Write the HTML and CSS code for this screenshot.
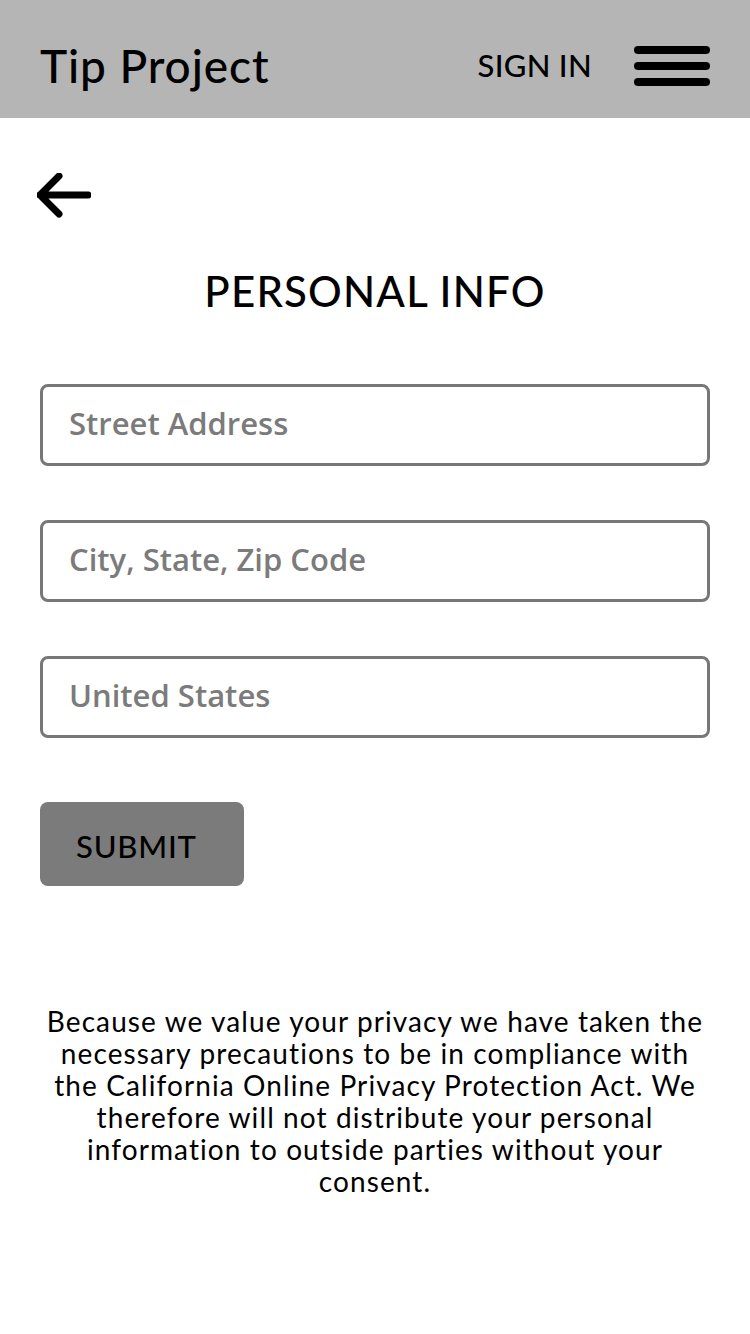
FILE: index.html
```html
<!DOCTYPE html>
<html lang="en">
<head>
<meta charset="utf-8">
<title>Tip Project</title>
<link rel="stylesheet" href="styles.css">
</head>
<body>
<header class="topbar">
  <div class="brand">Tip Project</div>
  <nav class="nav">
    <a class="signin" href="#">SIGN IN</a>
    <button class="burger" aria-label="Menu"><span></span><span></span><span></span></button>
  </nav>
</header>
<main class="page">
  <a class="back" href="#" aria-label="Back">
    <svg width="54" height="46" viewBox="0 0 54 46"><path d="M22 3 L3 22 L22 41 M3 22 H51" fill="none" stroke="#000" stroke-width="7" stroke-linecap="round" stroke-linejoin="round"/></svg>
  </a>
  <h1 class="title">PERSONAL INFO</h1>
  <form class="form">
    <input class="field" type="text" placeholder="Street Address">
    <input class="field" type="text" placeholder="City, State, Zip Code">
    <input class="field" type="text" placeholder="United States">
    <button class="submit" type="button">SUBMIT</button>
  </form>
  <p class="notice">Because we value your privacy we have taken the<br>necessary precautions to be in compliance with<br>the California Online Privacy Protection Act. We<br>therefore will not distribute your personal<br>information to outside parties without your<br>consent.</p>
</main>
</body>
</html>
```
FILE: styles.css
```css
html, body {
  margin: 0;
  padding: 0;
  background: #fff;
}
body {
  font-family: "Lato", "Noto Sans", sans-serif;
  color: #000;
}
.topbar {
  height: 118px;
  background: #b5b5b5;
  display: flex;
  align-items: center;
  justify-content: space-between;
  padding: 12px 40px 0 40px;
  box-sizing: border-box;
}
.brand {
  font-size: 46px;
  font-weight: 500;
  letter-spacing: 0.9px;
}
.nav {
  display: flex;
  align-items: center;
  gap: 42px;
}
.signin {
  color: #000;
  text-decoration: none;
  font-size: 31px;
  font-weight: 500;
  letter-spacing: 0.3px;
}
.burger {
  display: flex;
  flex-direction: column;
  gap: 8px;
  padding: 0;
  border: 0;
  background: none;
  width: 76px;
  margin-top: 2px;
}
.burger span {
  display: block;
  width: 76px;
  height: 8px;
  border-radius: 4px;
  background: #000;
}
.page {
  padding: 0 40px;
}
.back {
  display: block;
  width: 54px;
  height: 46px;
  margin-top: 55px;
  margin-left: -3px;
}
.back svg { display: block; }
.title {
  margin: 47px 0 0;
  text-align: center;
  font-size: 42px;
  line-height: 50px;
  font-weight: 500;
  letter-spacing: 1.2px;
}
.form {
  display: flex;
  flex-direction: column;
  align-items: flex-start;
  gap: 54px;
  margin-top: 68px;
}
.field {
  width: 100%;
  height: 82px;
  box-sizing: border-box;
  border: 3px solid #777;
  border-radius: 8px;
  padding: 0 26px 5px;
  font-family: "Open Sans", "Lato", sans-serif;
  font-size: 31px;
  font-weight: 600;
  color: #333;
  outline: none;
}
.field::placeholder {
  color: #7b7b7b;
  opacity: 1;
}
.submit {
  margin-top: 10px;
  width: 204px;
  height: 84px;
  border: 0;
  border-radius: 8px;
  background: #7b7b7b;
  color: #000;
  font-family: "Lato", sans-serif;
  font-size: 31px;
  font-weight: 500;
  letter-spacing: 0.8px;
  text-align: left;
  padding: 4px 0 0 36px;
}
.notice {
  margin: 119px -10px 0;
  text-align: center;
  font-size: 28px;
  line-height: 32px;
  letter-spacing: 1.1px;
}
```
